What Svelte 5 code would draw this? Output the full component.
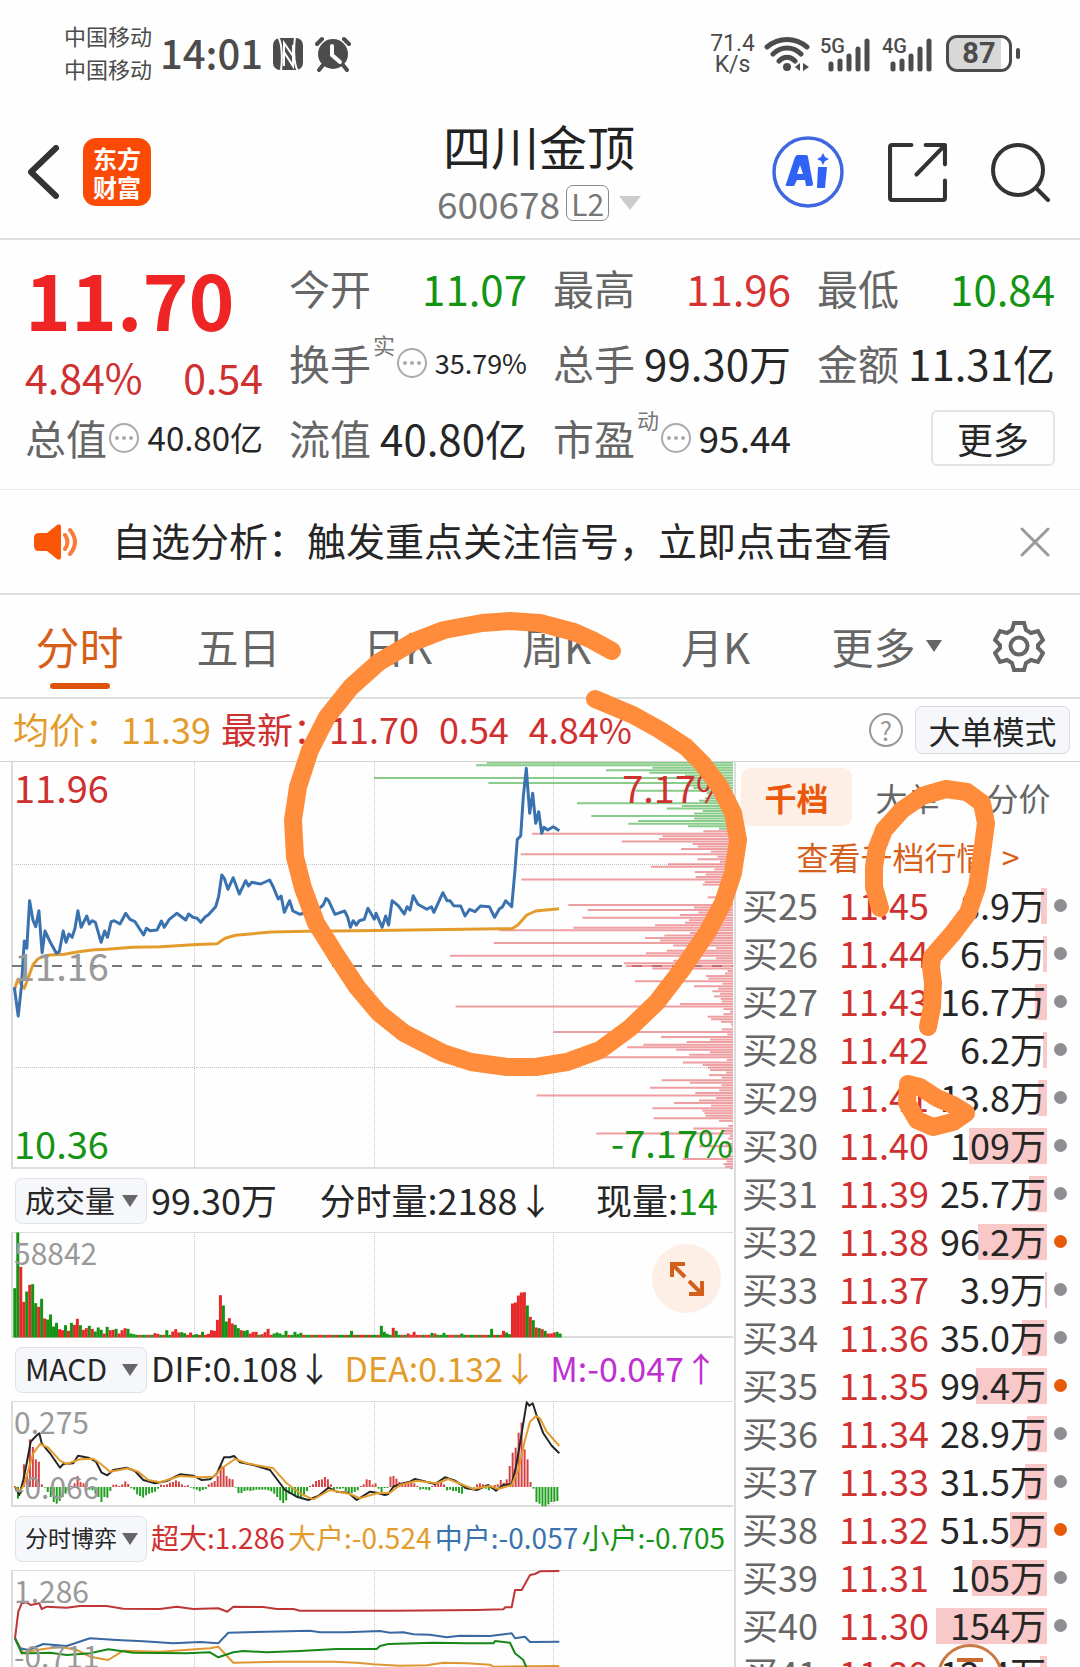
<script>
  const stats = [
    { label: '今开', value: '11.07', tone: 'down' },
    { label: '最高', value: '11.96', tone: 'up' },
    { label: '最低', value: '10.84', tone: 'down' },
    { label: '换手', note: '实', hint: true, value: '35.79%', size: 'xs' },
    { label: '总手', value: '99.30万' },
    { label: '金额', value: '11.31亿' },
    { label: '总值', hint: true, value: '40.80亿', size: 'sm' },
    { label: '流值', value: '40.80亿' },
    { label: '市盈', note: '动', hint: true, value: '95.44', size: 'md' },
  ];

  const periods = ['分时', '五日', '日K', '周K', '月K'];

  const orders = [
    [25, '11.45', '8.9万', 6], [26, '11.44', '6.5万', 4], [27, '11.43', '16.7万', 12],
    [28, '11.42', '6.2万', 4], [29, '11.41', '13.8万', 9], [30, '11.40', '109万', 78],
    [31, '11.39', '25.7万', 18], [32, '11.38', '96.2万', 69, true], [33, '11.37', '3.9万', 2],
    [34, '11.36', '35.0万', 25], [35, '11.35', '99.4万', 71, true], [36, '11.34', '28.9万', 20],
    [37, '11.33', '31.5万', 22], [38, '11.32', '51.5万', 37, true], [39, '11.31', '105万', 75],
    [40, '11.30', '154万', 111], [41, '11.29', '12.4万', 7],
  ];

  // Turns a flat list x0 y0 x1 y1 ... into polyline points on the plot.
  function plot(list, sx, sy, ox, oy) {
    const n = list.trim().split(/[\s,]+/).map(Number);
    const out = [];
    for (let i = 0; i < n.length; i += 2) {
      out.push(`${(n[i] / sx + ox).toFixed(1)},${(n[i + 1] / sy + oy).toFixed(1)}`);
    }
    return out.join(' ');
  }

  const price =
    plot(`40,382 51,468 60,380 68,243 75,265 83,122 92,180 100,200 109,152 118,278 126,213 140,245 158,280 166,275
      177,213 185,247 193,222 202,232 210,205 218,152 227,202 243,168 250,192 258,182 267,187 283,247 293,213 301,232
      311,185 320,182 336,192 352,160 364,178 378,185 402,225 410,205 420,212 440,210 452,183 460,202 474,178 495,160
      520,180 528,162 540,172 552,175 562,187 575,170 583,165 604,140 612,110 621,45 628,55 638,88 653,53 670,102
      688,62 696,78 705,67 730,72 755,60 765,80 779,117 787,108 796,157 811,122 820,153 840,163 865,155 890,148
      905,135 913,115 920,122 938,163 965,153 973,170 981,202 989,182 998,195 1006,182 1020,178 1030,145 1048,178
      1053,160 1070,202 1080,168 1088,195 1098,122 1115,137 1132,162 1140,140 1148,150 1157,107 1170,133 1185,142
      1195,148 1208,140 1215,157 1240,98 1252,122 1260,122 1270,137 1290,138 1302,168 1315,148 1330,155 1345,138
      1370,140 1385,172 1398,147 1407,140 1416,122`, 2.8, 3, 0, 98) +
    ' ' +
    plot(`335,500 345,390 352,298 362,288 370,170 379,85 389,220 398,160 407,250 416,215 425,280 432,262 443,270
      460,260 478,272`, 3, 3, 400, -22);

  const average = plot(`42,385 50,358 60,375 68,385 80,350 92,315 105,298 118,290 140,285 180,283 220,275 265,269
    300,268 370,262 450,260 540,254 608,251 630,235 660,226 760,216 860,214 1000,212 1200,209 1400,206 1433,206
    1450,195 1475,165 1500,153 1565,146`, 2.8, 3, 0, 98);

  // Left end of every order-depth level, top to bottom.
  const depth = `260 228 757 618 748 855 -78 870 265 858 880 707 920 925 915 897 531 845 800 908 882 574 882 714 685 864
    957 910 396 787 777 665 878 893 843 932 362 953 892 960 804 752 943 884 917 887 364 914 908 990 985 980 975 923
    960 940 505 882 563 895 840 547 867 855 765 520 298 870 793 735 780 281 820 948 800 738 150 948 820 672 678 757
    983 975 918 925 705 968 882 955 937 960 942 962 965 840 167 970 990 970 923 933 963 993 996 965 460 982 783 930
    860 730 682 828 930 868 560 980 848 908 923 930 978 927 965 785 870 965 750 958 886 410 948 897 822 933 757 907
    913 917 761 957 998 985 880 965 589 990 985 997 975 898 990 985 997 975 848 980 970 975 990`
    .split(/\s+/)
    .map((v, i) => ({ x: Number(v) / 3 + 400, y: 0.7 + i * 2.54, ask: i < 27 }));

  const early = [148, 315, -212, -107, 138, -158, 160, 103, -92, 116, -57, 54, 69, 33, 44, -25, -22, 37, -20, 44, -38,
    -56, 37, -23, -28, 35, -26, 18, 30, 23, -12, 32, -22, -23, 26, -12, -22, -28, 26, 12, 10];
  const spikes = { 46: -13, 47: -11, 50: 22, 52: -18, 53: -25, 54: -15, 55: 16, 56: 13, 58: -15, 60: 10, 62: 17, 64: -11,
    65: -22, 66: -20, 67: -53, 68: -127, 69: 96, 70: 48, 71: -58, 72: -42, 73: 38, 74: 28, 75: -22, 76: 20, 77: 22,
    78: -12, 79: -17, 80: -17, 82: -10, 83: -16, 84: -26, 86: 12, 87: 15, 88: 12, 90: 20, 93: 17, 94: 10, 95: 14,
    112: 20, 122: 35, 123: 17, 124: 11, 126: -29, 127: 20, 131: -12, 133: -17, 139: 14, 140: -12, 143: 14, 149: 12,
    159: 26, 163: -20, 164: 15, 165: 10, 166: -102, 167: -105, 168: -126, 169: -135, 170: -136, 171: 96, 172: -62,
    173: 52, 174: -30, 175: 28, 176: -25, 177: 20, 178: -12, 179: -12, 180: -15, 181: 17, 182: 12 };
  // A positive volume closes down (green), a negative one closes up (red).
  const volume = Array.from({ length: 184 }, (_, i) => {
    const v = early[i] ?? spikes[i - 1] ?? ((i * 7) % 11 < 5 ? 8 : -8);
    return { x: 13.3 + i * 2.98, h: Math.abs(v) / 3, up: v < 0 };
  });

  const histogram = `0 -35 -20 65 30 140 117 80 73 5 -2 -15 -30 -45 -50 -42 -30 -20 -12 0 8 30 12 8 10 -8 -10 -20 -30 -45
    -30 -32 -12 4 4 0 5 14 6 -4 -8 -22 -27 -32 -25 -20 -17 -14 -5 4 2 5 10 12 17 13 5 0 3 -2 -5 -8 -13 -9 -6 5 10 15
    30 60 60 30 22 20 -2 -18 -18 -12 -10 -12 -10 -8 -8 -8 -8 -10 -13 -20 -30 -40 -48 -40 -20 -18 -28 -30 -30 -28 -12
    0 5 15 18 20 27 20 5 -8 -5 -6 -4 -12 -15 -18 -15 -10 0 5 20 18 4 8 -5 -15 -3 -3 28 30 22 12 5 8 14 10 8 0 -8 -6 -8
    -10 0 8 14 12 5 -10 -8 -12 -12 -18 -20 -5 -3 -4 -2 5 8 5 -5 -10 -5 3 5 18 10 20 60 100 115 160 190 110 80 12 -5
    -45 -50 -58 -58 -52 -45 -44 -42`
    .split(/\s+/)
    .map((v, i) => ({ x: 15 + i * 2.98, v: Number(v) / 3 }));

  const dif = plot(`45,950 58,975 70,930 80,880 92,815 108,798 118,790 125,820 150,850 180,893 190,882 220,880 234,857
    265,863 288,875 305,908 322,916 340,900 380,893 405,903 430,930 465,940 500,933 540,913 580,917 605,930 630,928
    650,912 672,862 690,862 702,858 720,877 760,885 810,900 855,960 890,980 925,990 955,978 985,953 1010,965 1045,968
    1070,990 1110,965 1130,968 1155,975 1165,972 1180,950 1210,940 1230,935 1245,927 1305,942 1335,922 1365,932
    1400,955 1430,960 1465,945 1488,962 1510,945 1535,942 1548,890 1560,820 1580,697 1588,707 1598,700 1610,737
    1630,790 1655,827 1678,850`, 3, 3, 0, -231);
  const dea = plot(`45,950 58,965 72,945 85,900 100,850 120,822 145,833 180,872 200,882 240,868 280,866 300,880 330,905
    385,895 415,905 445,930 480,937 540,918 600,922 640,920 665,895 705,867 740,880 820,895 860,940 900,970 940,988
    990,960 1050,972 1080,985 1130,970 1170,968 1200,945 1250,932 1310,940 1345,927 1390,945 1420,957 1470,948
    1495,957 1535,945 1555,900 1575,810 1590,755 1608,738 1620,745 1640,785 1678,828`, 3, 3, 0, -231);

  const flows = [
    { tone: 'orange', points: plot(`45,1405 70,1448 110,1440 180,1430 230,1440 270,1460 325,1470 370,1442 480,1445
      630,1435 655,1430 700,1478 850,1475 1000,1475 1070,1478 1120,1483 1200,1487 1280,1486 1330,1478 1400,1480
      1470,1484 1480,1490 1678,1488`, 3, 3, 0, -400) },
    { tone: 'blue', points: plot(`45,1405 60,1435 85,1440 130,1422 200,1428 270,1405 350,1410 430,1414 520,1420
      600,1416 655,1420 685,1388 800,1385 930,1382 960,1387 1040,1387 1140,1383 1170,1388 1210,1387 1240,1393
      1290,1394 1340,1402 1380,1397 1470,1398 1535,1390 1545,1405 1575,1400 1590,1416 1678,1415`, 3, 3, 0, -400) },
    { tone: 'green', points: plot(`45,1405 65,1450 90,1450 150,1448 200,1455 270,1450 325,1438 400,1448 560,1450
      630,1447 655,1462 700,1447 730,1443 800,1447 900,1443 1010,1437 1130,1437 1140,1428 1165,1422 1300,1418
      1400,1420 1480,1420 1485,1413 1530,1418 1545,1450 1570,1470 1580,1495`, 3, 3, 0, -400) },
    { tone: 'red', points: plot(`45,1405 55,1325 65,1300 80,1297 92,1305 118,1300 125,1317 140,1310 200,1313 240,1308
      320,1308 370,1316 480,1317 530,1310 580,1317 655,1315 682,1325 700,1310 790,1311 830,1317 880,1317 900,1322
      1180,1322 1430,1320 1510,1318 1516,1312 1535,1312 1545,1260 1565,1260 1590,1215 1605,1212 1620,1204 1678,1203`,
      3, 3, 0, -400) },
  ];

  const columns = [194, 374, 553];
</script>

{#snippet picker(name, text, small)}
  <label class="picker" class:small>
    <select aria-label={name}><option>{text}</option></select>
    <svg class="caret" viewBox="0 0 16 12" aria-hidden="true"><path d="M0 0h16L8 12z" /></svg>
  </label>
{/snippet}

{#snippet signal()}
  <svg viewBox="0 0 50 36" aria-hidden="true">
    <path d="M10 28v5M19 25v8M28 20v13M37 13v20M46 5v28" stroke="#4c4c4c" stroke-width="5" stroke-linecap="round" />
  </svg>
{/snippet}

<div class="app">
  <header class="status">
    <div class="carriers"><span>中国移动</span><span>中国移动</span></div>
    <time>14:01</time>
    <svg class="nfc" viewBox="0 0 32 34" aria-hidden="true">
      <rect x="1" y="1" width="30" height="32" rx="7" fill="#4c4c4c" />
      <path d="M6 0c5 7 4 26 3 34M26 34c-5-7-4-26-3-34" fill="none" stroke="#fff" stroke-width="2" />
      <path d="M12 29V6l9 13V8M12 15l9 14V19" fill="none" stroke="#fff" stroke-width="2" />
    </svg>
    <svg class="alarm" viewBox="0 0 36 36" aria-hidden="true">
      <circle cx="18" cy="18" r="15" fill="#4c4c4c" />
      <path d="M2 8l5-5M34 8l-5-5M8 29l-4 5M28 29l4 5" stroke="#4c4c4c" stroke-width="4" stroke-linecap="round" />
      <path d="M17 10v9l8 7" fill="none" stroke="#fff" stroke-width="4" stroke-linecap="round" />
    </svg>
    <div class="speed"><span>71.4</span><span>K/s</span></div>
    <svg class="wifi" viewBox="0 0 46 36" aria-hidden="true">
      <g fill="none" stroke="#4c4c4c" stroke-width="5" stroke-linecap="round">
        <path d="M3 11c12-10 28-10 40 0M9 18c8-8 20-8 28 0M15 25c5-5 11-5 16 0" />
      </g>
      <circle cx="23" cy="31" r="4" fill="#4c4c4c" />
      <path d="M36 27v8l-5-4zM39 27v8l6-4z" fill="#4c4c4c" />
    </svg>
    <div class="cell">{@render signal()}<span>5G</span></div>
    <div class="cell">{@render signal()}<span>4G</span></div>
    <div class="battery"><span>87</span></div>
  </header>

  <nav class="title-bar">
    <div class="side">
      <button class="icon back" aria-label="返回">
        <svg viewBox="0 0 32 54"><path d="M29 3L4 27l25 24" fill="none" stroke="#333" stroke-width="6" stroke-linecap="round" stroke-linejoin="round" /></svg>
      </button>
      <a class="brand" href="#home"><span>东方</span><span>财富</span></a>
    </div>
    <div class="stock">
      <h1>四川金顶</h1>
      <button class="code">
        <span>600678</span><span class="level">L2</span>
        <svg viewBox="0 0 22 14" aria-hidden="true"><path d="M0 0h22L11 14z" fill="#ccc" /></svg>
      </button>
    </div>
    <div class="side actions">
      <button class="icon ai" aria-label="Ai">
        <svg viewBox="0 0 72 72">
          <circle cx="36" cy="36" r="34" fill="none" stroke="#3f68e0" stroke-width="3.5" />
          <path fill="#2f62f5" fill-rule="evenodd" d="M25 19h9q2 0 2 2l5 27q0 2-2 2h-5l-1-6h-8l-3 6h-7q-2 0-1-2L23 21zM28 29l-3 9h6z" />
          <path fill="#2f62f5" d="M46 31h9l-2 21h-8zM51 17l2 4 4 2-4 2-2 4-2-4-4-2 4-2z" />
        </svg>
      </button>
      <button class="icon share" aria-label="分享">
        <svg viewBox="0 0 58 58"><path d="M23 2H4q-2 0-2 2v50q0 2 2 2h50q2 0 2-2V37M37 2h19v19M55 3L28 31" fill="none" stroke="#333" stroke-width="4" stroke-linecap="round" stroke-linejoin="round" /></svg>
      </button>
      <button class="icon search" aria-label="搜索">
        <svg viewBox="0 0 60 60"><circle cx="27" cy="28" r="25" fill="none" stroke="#333" stroke-width="4" /><path d="M45 46l12 12" stroke="#333" stroke-width="4" stroke-linecap="round" /></svg>
      </button>
    </div>
  </nav>

  <section class="quote">
    <div class="last">
      <strong>11.70</strong>
      <div><span>4.84%</span><span>0.54</span></div>
    </div>
    {#each stats as s}
      <div class="stat">
        <span class="name">{s.label}</span>
        {#if s.note}<sup>{s.note}</sup>{/if}
        {#if s.hint}
          <svg class="dots" viewBox="0 0 30 30" aria-hidden="true">
            <circle cx="15" cy="15" r="14" fill="none" stroke="#aaa" stroke-width="2" />
            <circle cx="8" cy="15" r="2" fill="#aaa" /><circle cx="15" cy="15" r="2" fill="#aaa" /><circle cx="22" cy="15" r="2" fill="#aaa" />
          </svg>
        {/if}
        <span class="value {s.tone ?? ''} {s.size ?? ''}">{s.value}</span>
      </div>
    {/each}
    <div class="stat end"><button class="more">更多</button></div>
  </section>

  <section class="notice">
    <svg class="speaker" viewBox="0 0 44 36" aria-hidden="true">
      <path d="M5 9h8L23 1q4-2 4 2v30q0 4-4 2L13 27H5q-5 0-5-5v-8q0-5 5-5z" fill="#fb5607" />
      <path d="M31 11q5 7 0 14M36 6q10 12 0 24" fill="none" stroke="#fb7a3a" stroke-width="4" stroke-linecap="round" />
    </svg>
    <a href="#analysis">自选分析：触发重点关注信号，立即点击查看</a>
    <button class="icon close" aria-label="关闭">
      <svg viewBox="0 0 30 30"><path d="M2 2l26 26M28 2L2 28" stroke="#999" stroke-width="3" stroke-linecap="round" /></svg>
    </button>
  </section>

  <nav class="periods">
    {#each periods as p, i}
      <button class:active={i === 0}>{p}</button>
    {/each}
    <button class="others">更多<svg class="caret" viewBox="0 0 16 12" aria-hidden="true"><path d="M0 0h16L8 12z" /></svg></button>
    <button class="icon gear" aria-label="设置">
      <svg viewBox="0 0 52 52" fill="none" stroke="#666" stroke-width="4">
        <path stroke-linejoin="miter" d="M21 3h10l2 7 5 3 7-2 5 9-5 5v3l5 5-5 9-7-2-5 3-2 7H21l-2-7-5-3-7 2-5-9 5-5v-3l-5-5 5-9 7 2 5-3z" />
        <circle cx="26" cy="26" r="8.500" />
      </svg>
    </button>
  </nav>

  <div class="ticker">
    <span class="avg">均价：11.39</span>
    <span class="now">最新：<b>11.70</b><b>0.54</b><b>4.84%</b></span>
    <span class="help" role="img" aria-label="帮助">?</span>
    <button class="mode">大单模式</button>
  </div>

  <main>
    <div class="charts">
      <figure class="main-chart">
        <svg viewBox="0 0 734 407" preserveAspectRatio="none" aria-label="分时走势">
          <g class="grid">
            {#each columns as x}<path d="M{x}.500 0V407" />{/each}
            <path d="M12 102.500H733M12 305.500H733" />
          </g>
          <path class="frame" d="M12 0V406H733" />
          <path class="middle" d="M12 204H733" />
          {#each depth as d}
            <path class={d.ask ? 'ask' : 'bid'} d="M{d.x} {d.y}H733" />
          {/each}
          <polyline class="average" points={average} />
          <polyline class="price" points={price} />
        </svg>
        <span class="tag tl red">11.96</span>
        <span class="tag tr red">7.17%</span>
        <span class="tag mid">11.16</span>
        <span class="tag bl green">10.36</span>
        <span class="tag br green">-7.17%</span>
      </figure>

      <div class="legend">
        {@render picker('指标一', '成交量', false)}
        <div class="values volume-values"><span>99.30万</span><span>分时量:2188↓</span><span>现量:<b class="green">14</b></span></div>
      </div>
      <figure class="sub-chart">
        <svg viewBox="0 0 734 106" preserveAspectRatio="none" aria-label="成交量">
          <g class="grid">{#each columns as x}<path d="M{x}.500 0V106" />{/each}</g>
          <path class="frame" d="M733 0H12V105H733" />
          {#each volume as v}
            <rect class={v.up ? 'up-bar' : 'down-bar'} x={v.x} y={105.5 - v.h} width="3" height={v.h} />
          {/each}
        </svg>
        <span class="tag tl">58842</span>
        <button class="expand" aria-label="全屏">
          <svg viewBox="0 0 34 34"><path d="M2 15V2h13M2 2l13 13M32 19v13H19M32 32L19 19" fill="none" stroke="#d2601a" stroke-width="4" /></svg>
        </button>
      </figure>

      <div class="legend">
        {@render picker('指标二', 'MACD', false)}
        <div class="values macd-values"><span>DIF:0.108↓</span><span class="amber">DEA:0.132↓</span><span class="violet">M:-0.047↑</span></div>
      </div>
      <figure class="sub-chart">
        <svg viewBox="0 0 734 106" preserveAspectRatio="none" aria-label="MACD">
          <g class="grid">{#each columns as x}<path d="M{x}.500 0V106" />{/each}</g>
          <path class="frame" d="M733 0H12V105H733" />
          {#each histogram as h}
            <path class={h.v >= 0 ? 'hist-up' : 'hist-down'} d="M{h.x} 86V{h.v >= 0 ? 85 - h.v : 86 - h.v}" />
          {/each}
          <polyline class="dif" points={dif} />
          <polyline class="dea" points={dea} />
        </svg>
        <span class="tag tl">0.275</span>
        <span class="tag bl">-0.066</span>
      </figure>

      <div class="legend">
        {@render picker('指标三', '分时博弈', true)}
        <div class="values flow-values"><span class="red">超大:1.286</span><span class="amber">大户:-0.524</span><span class="blue">中户:-0.057</span><span class="green">小户:-0.705</span></div>
      </div>
      <figure class="sub-chart">
        <svg viewBox="0 0 734 106" preserveAspectRatio="none" aria-label="分时博弈">
          <g class="grid">{#each columns as x}<path d="M{x}.500 0V106" />{/each}</g>
          <path class="frame" d="M733 0H12V105H733" />
          {#each flows as f}<polyline class="flow {f.tone}-line" points={f.points} />{/each}
        </svg>
        <span class="tag tl">1.286</span>
        <span class="tag bl">-0.711</span>
      </figure>
    </div>

    <aside>
      <nav class="book-tabs">
        <button class="active">千档</button><button>大单</button><button>分价</button>
      </nav>
      <a class="book-link" href="#depth"><span>查看千档行情</span><span>&gt;</span></a>
      <table>
        <tbody>
          {#each orders as [level, p, amount, width, hot]}
            <tr>
              <th scope="row">买{level}</th>
              <td class="cost">{p}</td>
              <td class="amount"><i style="width: {width}px"></i><span>{amount}</span></td>
              <td class="mark"><em class:hot></em></td>
            </tr>
          {/each}
        </tbody>
      </table>
    </aside>
  </main>

  <button class="float" aria-label="快捷操作"><i></i></button>

  <svg class="ink" viewBox="0 0 1080 1667" aria-hidden="true">
    <path d="M612 651L592 640 574 632 540 623 510 621 482 623 444 630 413 642 379 662 351 687 327 717 310 750 298 787 293 820 295 857 303 888 316 923 336 955 357 987 379 1013 404 1033 443 1053 471 1062 507 1067 536 1067 567 1062 600 1050 630 1028 657 1002 683 968 707 933 723 903 733 873 738 840 733 813 720 787 702 763 686 747 660 730 633 715 595 699" />
    <path d="M880 908L874 887 874 867 877 848 884 830 902 810 922 796 946 789 967 792 982 803 986 823 982 853 977 887 968 913 953 933 932 957 931 967 933 983 932 1007 928 1027" />
    <path d="M908 1084L920 1087 937 1098 953 1105 966 1113 953 1122 933 1127 917 1120 907 1103z" />
  </svg>
</div>

<style>
  :global(body) {
    margin: 0;
    background: #fefefe;
  }
  .app {
    position: relative;
    height: 100vh;
    overflow: hidden;
    font-family: 'Noto Sans CJK SC', 'Noto Sans', sans-serif;
    font-size: 36px;
    color: #262626;
  }
  button, select {
    font: inherit;
    color: inherit;
    padding: 0;
    margin: 0;
    border: 0;
    background: none;
  }
  a { color: inherit; text-decoration: none; }
  svg { display: block; }
  b { font-weight: 400; }
  figure { margin: 0; position: relative; }
  .icon { display: flex; flex: none; }
  .icon svg { width: 100%; }
  .red { color: #cf3030; }
  .green { color: #149414; }
  .amber { color: #e39c2c; }
  .blue { color: #3a72ae; }
  .violet { color: #c02fd0; }
  .caret { width: 16px; height: 12px; fill: #666; }

  .status {
    display: flex;
    align-items: center;
    box-sizing: border-box;
    height: 98px;
    padding: 9px 68px 0 64px;
    color: #4c4c4c;
  }
  .carriers, .speed { display: flex; flex-direction: column; }
  .carriers { padding-bottom: 4px; font-size: 22px; line-height: 33px; }
  time { margin: 0 9px 0 8px; padding-bottom: 4px; font-size: 40px; line-height: 48px; font-weight: 500; }
  .nfc { width: 32px; height: 34px; }
  .alarm { width: 36px; height: 36px; margin-left: 11px; }
  .speed {
    margin-left: auto;
    font: 23px/21px Roboto, sans-serif;
    text-align: center;
  }
  .wifi { width: 46px; height: 36px; margin-left: 9px; }
  .cell { position: relative; width: 52px; height: 36px; margin-left: 10px; }
  .cell svg { width: 52px; height: 36px; }
  .cell span {
    position: absolute;
    left: 0;
    top: 0;
    font: 500 20px/20px Roboto, sans-serif;
  }
  .battery {
    position: relative;
    box-sizing: border-box;
    width: 66px;
    height: 37px;
    margin-left: 12px;
    border: 3px solid #4c4c4c;
    border-radius: 11px;
    background: linear-gradient(90deg, #d8d8d8 86%, #fff 86%);
    font: 700 29px/31px Roboto, sans-serif;
    text-align: center;
  }
  .battery::after {
    content: '';
    position: absolute;
    right: -11px;
    top: 10px;
    width: 4px;
    height: 11px;
    border-radius: 2px;
    background: #4c4c4c;
  }

  .title-bar {
    display: grid;
    grid-template-columns: 1fr auto 1fr;
    align-items: center;
    box-sizing: border-box;
    height: 142px;
    padding: 8px 29px 0 27px;
    border-bottom: 2px solid #dcdfdf;
  }
  .side { display: flex; align-items: center; }
  .actions { justify-content: flex-end; gap: 44px; }
  .back { width: 32px; margin-right: 24px; }
  .brand {
    display: flex;
    flex-direction: column;
    justify-content: center;
    width: 68px;
    height: 68px;
    border-radius: 13px;
    background: #fb4a05;
    color: #fff;
    font-size: 24px;
    line-height: 29px;
    font-weight: 700;
    text-align: center;
  }
  .stock { display: flex; flex-direction: column; align-items: center; padding-bottom: 5px; }
  h1 { margin: 0; font-size: 48px; line-height: 66px; font-weight: 400; color: #222; }
  .code { display: flex; align-items: center; color: #777; font-size: 37px; line-height: 50px; }
  .level {
    margin: 0 10px 0 6px;
    padding: 0 4px;
    border: 1px solid #888;
    border-radius: 7px;
    font-size: 30px;
    line-height: 34px;
  }
  .code svg { width: 22px; height: 14px; }
  .ai { width: 72px; }
  .share { width: 59px; }
  .search { width: 60px; }

  .quote {
    display: grid;
    grid-template-columns: repeat(4, 1fr);
    grid-auto-rows: 75px;
    column-gap: 26px;
    padding: 10px 25px 14px;
    border-bottom: 1px solid #ededed;
  }
  .last { grid-row: span 2; color: #cf3030; }
  .last strong {
    display: block;
    margin-bottom: 6px;
    color: #ef2424;
    font-size: 78px;
    line-height: 94px;
  }
  .last div { display: flex; justify-content: space-between; font-size: 41px; line-height: 52px; }
  .stat { display: flex; align-items: center; white-space: nowrap; line-height: 75px; }
  .name { color: #666; font-size: 41px; }
  sup { align-self: flex-start; margin-left: 2px; color: #777; font-size: 22px; line-height: 38px; }
  .dots { flex: none; width: 30px; height: 30px; margin-left: 2px; }
  .value { margin-left: auto; font-size: 42px; }
  .value.up { color: #d63232; }
  .value.down { color: #149414; }
  .value.xs { font-size: 27px; }
  .value.sm { font-size: 33px; }
  .value.md { font-size: 37px; }
  .end { justify-content: flex-end; }
  .more {
    box-sizing: border-box;
    width: 124px;
    height: 56px;
    border: 2px solid #e4e4e4;
    border-radius: 6px;
    font-size: 36px;
    line-height: 48px;
  }

  .notice {
    display: flex;
    align-items: center;
    box-sizing: border-box;
    height: 105px;
    padding: 0 30px 0 34px;
    border-bottom: 2px solid #dcdfdf;
    font-size: 39px;
    line-height: 56px;
  }
  .notice a { padding-bottom: 6px; }
  .speaker { width: 44px; height: 36px; margin-right: 34px; }
  .close { width: 30px; margin-left: auto; }

  .periods {
    display: grid;
    grid-template-columns: repeat(5, 159fr) 183fr 82fr;
    align-items: center;
    box-sizing: border-box;
    height: 104px;
    padding-right: 20px;
    border-bottom: 2px solid #dcdfdf;
    color: #666;
    font-size: 42px;
    line-height: 102px;
  }
  .periods .active {
    display: flex;
    flex-direction: column;
    align-items: center;
    color: #d6601a;
    font-size: 44px;
  }
  .periods .active::after {
    content: '';
    width: 60px;
    height: 6px;
    margin-top: -14px;
    margin-bottom: 8px;
    border-radius: 3px;
    background: #de540c;
  }
  .others { display: flex; align-items: center; justify-content: center; gap: 10px; }
  .gear { width: 52px; justify-self: center; }

  .ticker {
    display: flex;
    align-items: center;
    box-sizing: border-box;
    height: 63px;
    padding: 0 10px 0 13px;
    border-bottom: 1px solid #d4d4d4;
    line-height: 56px;
    white-space: nowrap;
  }
  .avg, .now { padding-bottom: 4px; }
  .avg { margin-right: 10px; color: #e39c2c; }
  .now { color: #cf3030; }
  .now b + b { margin-left: 20px; }
  .help {
    box-sizing: border-box;
    width: 34px;
    height: 34px;
    margin-left: auto;
    margin-right: 12px;
    border: 2px solid #999;
    border-radius: 50%;
    color: #999;
    font-size: 26px;
    line-height: 29px;
    text-align: center;
  }
  .mode {
    box-sizing: border-box;
    width: 155px;
    height: 48px;
    border: 1px solid #d8dade;
    border-radius: 7px;
    background: #f5f7fa;
    font-size: 32px;
    line-height: 42px;
  }

  main { display: grid; grid-template-columns: 734fr 346fr; }
  .charts { min-width: 0; }
  .charts figure > svg { width: 100%; height: 100%; }
  .main-chart { height: 407px; }
  .sub-chart { height: 106px; }
  .grid path { fill: none; stroke: #c4c4c4; stroke-width: 1; stroke-dasharray: 1 1; }
  .frame { fill: none; stroke: #dcdcdc; stroke-width: 2; }
  .middle { stroke: #777; stroke-width: 2; stroke-dasharray: 10 10; }
  .ask { stroke: #4cb04c; stroke-opacity: 0.65; stroke-width: 2; }
  .bid { stroke: #e66a6e; stroke-opacity: 0.65; stroke-width: 2; }
  polyline { fill: none; stroke-linejoin: round; }
  .average { stroke: #e39c2c; stroke-width: 3; }
  .price { stroke: #3a72b0; stroke-width: 3; }
  .up-bar { fill: #e62a2a; }
  .down-bar { fill: #149414; }
  .hist-up { stroke: #d64242; stroke-width: 2; }
  .hist-down { stroke: #1f9e1f; stroke-width: 2; }
  .dif { stroke: #262626; stroke-width: 2; }
  .dea { stroke: #e39c2c; stroke-width: 2; }
  .flow { stroke-width: 2; }
  .red-line { stroke: #bf3636; }
  .blue-line { stroke: #3a68a0; }
  .green-line { stroke: #178717; }
  .orange-line { stroke: #dd9730; }

  .tag { position: absolute; color: #999; font-size: 30px; line-height: 34px; }
  .main-chart .tag { font-size: 38px; line-height: 44px; }
  .tag.red { color: #cf3030; }
  .tag.green { color: #149414; }
  .tl { left: 14px; top: 3px; }
  .tr { right: 3px; top: 3px; }
  .mid { left: 14px; top: 181px; }
  .bl { left: 14px; bottom: 4px; }
  .br { right: 1px; bottom: 5px; }

  .expand {
    position: absolute;
    right: 13px;
    top: 12px;
    display: flex;
    align-items: center;
    justify-content: center;
    width: 69px;
    height: 69px;
    border-radius: 50%;
    background: #fdeee6;
  }
  .expand svg { width: 34px; height: 34px; }

  .legend {
    display: flex;
    align-items: center;
    box-sizing: border-box;
    height: 63px;
    padding-left: 15px;
    white-space: nowrap;
  }
  .values {
    display: flex;
    flex: 1;
    justify-content: space-between;
    padding: 0 16px 4px 4px;
    line-height: 56px;
  }
  .macd-values { font-size: 34px; }
  .flow-values { padding-right: 9px; font-size: 28px; }
  .picker { position: relative; flex: none; width: 132px; height: 46px; }
  .picker select {
    appearance: none;
    display: block;
    box-sizing: border-box;
    width: 100%;
    height: 46px;
    padding: 0 0 4px 9px;
    border: 1px solid #e0e2e6;
    border-radius: 7px;
    background: #f5f7fa;
    font-size: 30px;
    line-height: 40px;
  }
  .picker.small select { font-size: 23px; }
  .picker .caret { position: absolute; right: 9px; top: 17px; }

  aside { min-width: 0; border-left: 2px solid #dadcde; }
  .book-tabs {
    display: grid;
    grid-template-columns: repeat(3, 111px);
    padding: 6px 0 0 5px;
    color: #666;
    font-size: 32px;
    line-height: 58px;
  }
  .book-tabs .active { border-radius: 9px; background: #fdeee6; color: #ea580c; font-weight: 700; }
  .book-link {
    display: flex;
    justify-content: center;
    gap: 13px;
    padding-top: 4px;
    color: #d6601a;
    font-size: 32px;
    line-height: 52px;
  }
  table { width: 100%; border-collapse: collapse; table-layout: fixed; line-height: 44px; }
  th, td { padding: 0; height: 48px; font-weight: 400; vertical-align: top; }
  th { padding-left: 6px; width: 91px; color: #666; text-align: left; }
  .cost { width: 96px; color: #cf3030; text-align: right; }
  .amount { position: relative; text-align: right; }
  .amount i { position: absolute; right: 0; top: 6px; height: 36px; background: #f9c9c9; }
  .amount span { position: relative; padding-right: 1px; }
  .mark { width: 33px; }
  .mark em {
    display: block;
    width: 13px;
    height: 13px;
    margin: 17px 0 0 7px;
    border-radius: 50%;
    background: #8e8e93;
  }
  .mark .hot { background: #e65a0a; }

  .float {
    position: absolute;
    right: 77px;
    bottom: -43px;
    box-sizing: border-box;
    width: 66px;
    height: 66px;
    border: 3px solid #cc7a44;
    border-radius: 50%;
  }
  .float i { display: block; width: 26px; height: 4px; margin: -19px auto 0; background: #cc6a30; }

  .ink {
    position: absolute;
    left: 0;
    top: 0;
    width: 100%;
    pointer-events: none;
    fill: none;
    stroke: #ff8c3a;
    stroke-width: 18;
    stroke-linecap: round;
    stroke-linejoin: round;
  }
</style>
